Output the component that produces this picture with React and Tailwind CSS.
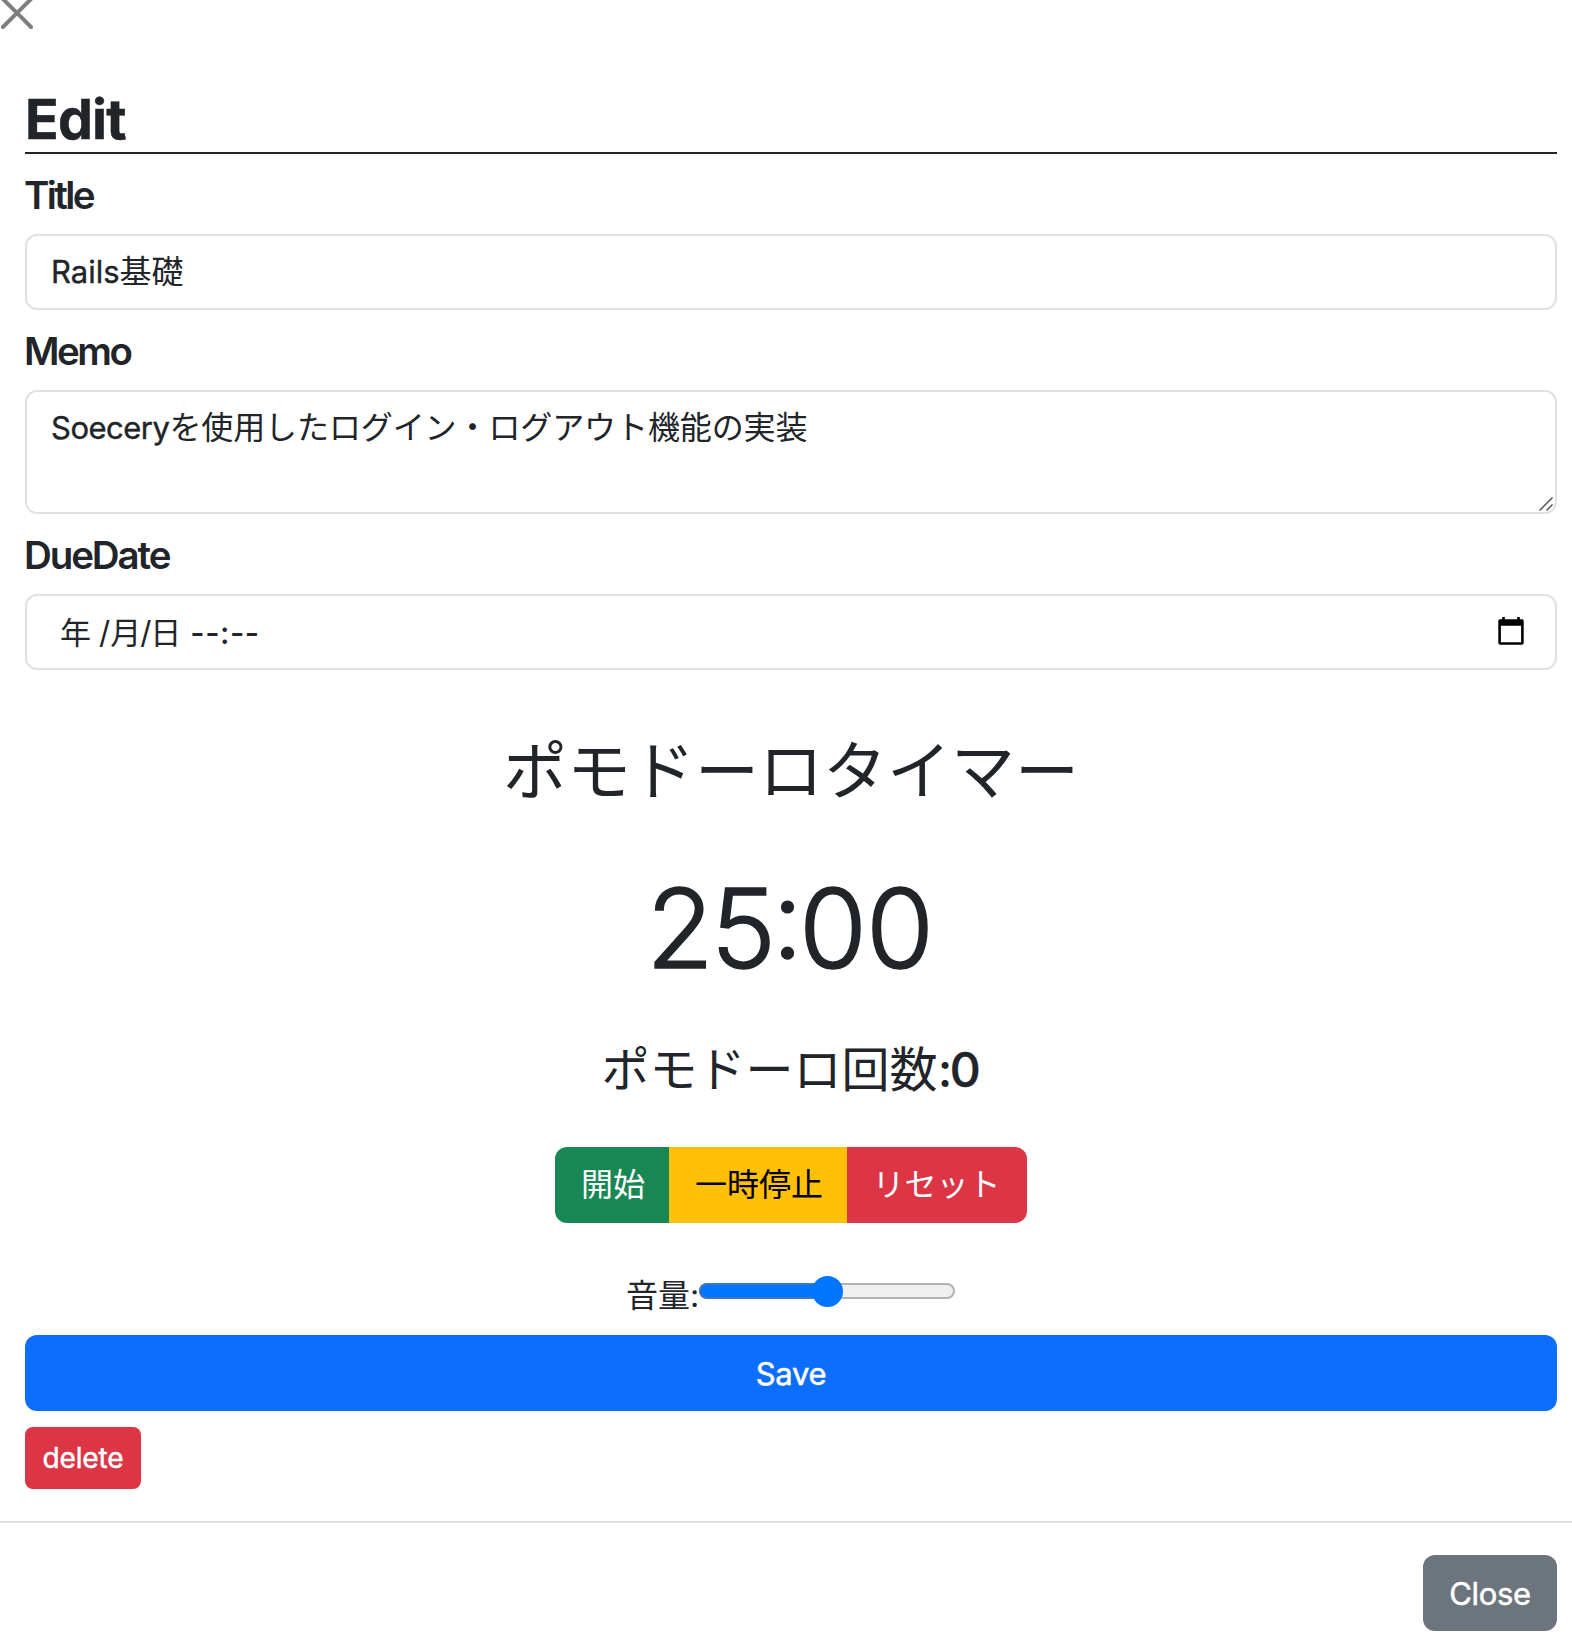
function CloseIcon() {
  return (
    <svg viewBox="0 0 16 16" className="-mt-[3px] ml-px block size-8 fill-black opacity-50">
      <path d="M.293.293a1 1 0 0 1 1.414 0L8 6.586 14.293.293a1 1 0 1 1 1.414 1.414L9.414 8l6.293 6.293a1 1 0 0 1-1.414 1.414L8 9.414l-6.293 6.293a1 1 0 0 1-1.414-1.414L6.586 8 .293 1.707a1 1 0 0 1 0-1.414z" />
    </svg>
  );
}

function CalendarIcon() {
  return (
    <svg viewBox="0 0 26 28" className="block h-7 w-[26px]">
      <path fillRule="evenodd" d="M4.2 0h2.6v2.3h12.4V0h2.6v2.3H24a1.8 1.8 0 0 1 1.7 1.8v21.8a1.8 1.8 0 0 1-1.8 1.8H2.1a1.8 1.8 0 0 1-1.8-1.8V4.1a1.8 1.8 0 0 1 1.8-1.8h2.1zM2.9 8.8v16.4h20.2V8.8z" />
    </svg>
  );
}

function Label({ className, children }) {
  return <label className={`mt-[17px] -ml-px block h-12 text-[38.5px] leading-[48px] font-semibold ${className}`}>{children}</label>;
}

export default function App() {
  return (
    <div className="h-[1650px] w-full overflow-hidden bg-white font-['Inter','Noto_Sans_CJK_JP',sans-serif] text-[31px] text-[#212529]">
      <button className="flex h-[89px] items-start" aria-label="Close">
        <CloseIcon />
      </button>
      <main className="mr-[15px] ml-[25px] flex flex-col">
        <h1 className="h-[65px] border-b-2 border-[#212529] text-[55.5px] leading-[60px] font-bold tracking-[-0.8px] [-webkit-text-stroke:0.5px]">Edit</h1>

        <Label className="tracking-[-2.6px]">Title</Label>
        <div className="mt-[15px] flex h-[76px] items-center rounded-xl border-2 border-[#dee2e6] px-6 leading-[48px] whitespace-nowrap">
          <div>
            <span className="[-webkit-text-stroke:0.4px]">Rails</span>
            <span className="text-[32px]">基礎</span>
          </div>
        </div>

        <Label className="tracking-[-2.5px]">Memo</Label>
        <div className="relative mt-[15px] h-[124px] rounded-xl border-2 border-[#dee2e6] px-6 py-3 leading-[48px] whitespace-nowrap">
          <span className="tracking-[-0.5px] [-webkit-text-stroke:0.4px]">Soecery</span>
          <span className="text-[32px] tracking-[-0.1px]">を使用したログイン・ログアウト機能の実装</span>
          <svg viewBox="0 0 16 16" className="absolute right-px bottom-0 size-4 fill-none stroke-[#555] stroke-[1.5]">
            <path d="M1.5 14.5 14.5 1.5M8.5 14.5l6-6" />
          </svg>
        </div>

        <Label className="tracking-[-2.1px]">DueDate</Label>
        <div className="mt-[15px] flex h-[76px] items-center rounded-xl border-2 border-[#dee2e6] pt-0.5 pr-[31px] pl-[33px]">
          <span>年</span>
          <span className="ml-2">/</span>
          <span className="-mr-px">月</span>
          <span className="-mr-px">/</span>
          <span>日</span>
          <span className="ml-[9px] font-medium tracking-[0.5px]">--:--</span>
          <span className="-mt-1 ml-auto"><CalendarIcon /></span>
        </div>

        <section className="flex flex-col items-center">
          <h2 className="mt-[62px] h-[77px] text-[64px] leading-[77px]">ポモドーロタイマー</h2>
          <p className="mt-[52px] -ml-[3px] h-[134px] text-[110px] leading-[134px] font-light tracking-[-3px] [-webkit-text-stroke:1.6px]">
            2<span className="tracking-[-4px]">5</span>
            <span className="relative -top-[10px] tracking-[-4px]">:</span><span className="tracking-[-1px]">00</span>
          </p>
          <p className="mt-[45px] h-[58px] pr-0.5 text-[48px] leading-[60px] font-medium tracking-[-2.4px]">
            <span className="font-normal tracking-normal">ポモドーロ回数</span>:<span className="[-webkit-text-stroke:0.5px]">0</span>
          </p>
          <div className="mt-[49px] flex h-[76px] overflow-hidden rounded-xl text-[32px]">
            <button className="w-[114px] bg-[#198754] pl-0.5 text-white">開始</button>
            <button className="w-[178px] bg-[#ffc107] pl-0.5 text-black">一時停止</button>
            <button className="w-[180px] bg-[#dc3545] pr-px text-white">リセット</button>
          </div>
          <div className="mt-[48px] flex h-12 w-[330px] items-start">
            <span className="w-[73px] shrink-0 pt-px text-[32px] leading-[48px] whitespace-nowrap">音量:</span>
            <div className="relative mt-3 h-4 w-64 overflow-visible rounded-full border-2 border-[#b2b2b2] bg-[#efefef]">
              <div className="absolute -top-0.5 -left-0.5 h-4 w-32 rounded-l-full border-2 border-r-0 border-[#3d74c6] bg-[#0075ff]" />
              <div className="absolute -top-[9.5px] left-[110.5px] size-[31px] rounded-full bg-[#0075ff]" />
            </div>
          </div>
        </section>

        <button className="mt-4 h-[76px] w-full rounded-xl bg-[#0d6efd] pt-0.5 tracking-[-0.3px] text-white [-webkit-text-stroke:0.5px]">Save</button>
        <button className="mt-4 h-[62px] w-[116px] rounded-lg bg-[#dc3545] text-[28px] tracking-[-0.1px] text-white [-webkit-text-stroke:0.5px]">delete</button>
      </main>
      <footer className="mt-8 flex justify-end border-t-2 border-[#dee2e6] pt-8 pr-[15px]">
        <button className="h-[76px] w-[134px] rounded-xl bg-[#6c757d] pt-0.5 tracking-[-0.3px] text-white [-webkit-text-stroke:0.5px]">Close</button>
      </footer>
    </div>
  );
}
